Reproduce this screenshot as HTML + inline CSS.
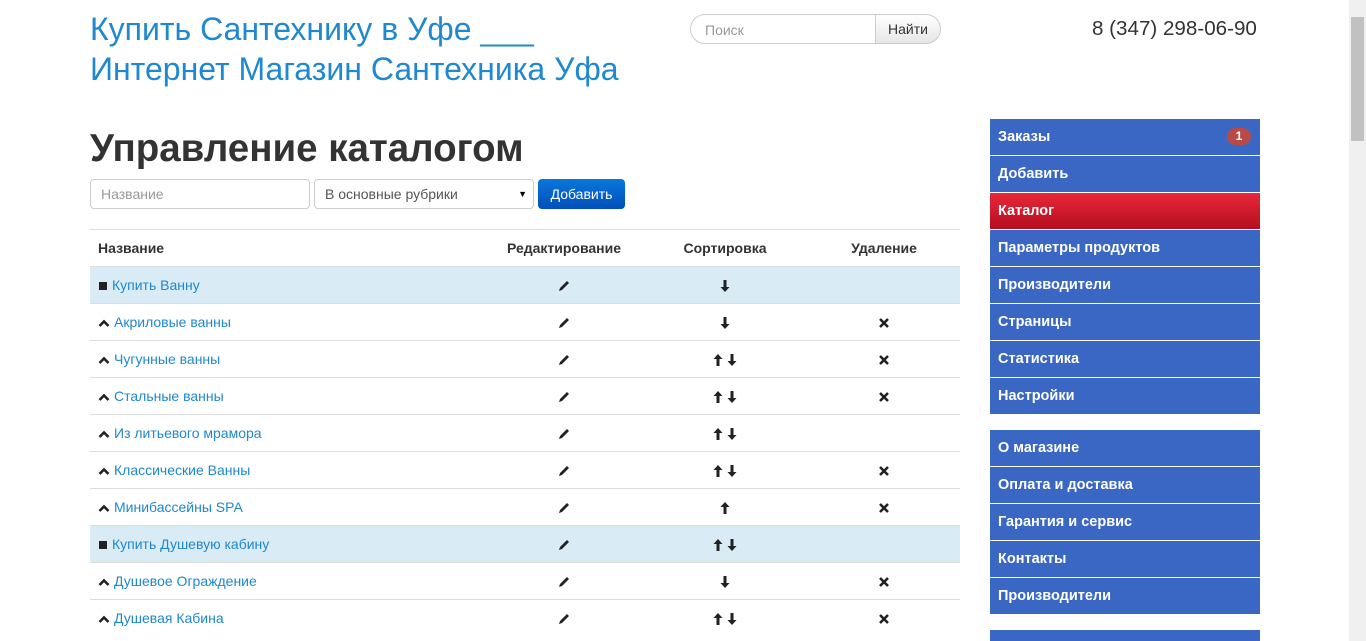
<!DOCTYPE html>
<html><head><meta charset="utf-8"><style>
html,body{margin:0;width:1366px;height:641px;overflow:hidden}
body{font-family:"Liberation Sans",Arial,sans-serif;background:#fff;position:relative;color:#333}
.a{position:absolute}
.title{left:90px;top:9px;font-size:32px;line-height:40px;color:#1e88d0}
.search{left:690px;top:14px;width:186px;height:30px;border:1px solid #ccc;border-radius:15px 0 0 15px;box-sizing:border-box;font-size:14px;color:#999;padding:7px 14px}
.sbtn{left:875px;top:14px;width:66px;height:30px;border:1px solid #ccc;border-radius:0 15px 15px 0;box-sizing:border-box;background:linear-gradient(#fff,#e6e6e6);font-size:14px;text-align:center;line-height:28px}
.phone{left:1092px;top:17px;font-size:20.6px;color:#333}
h1{position:absolute;left:90px;top:127px;margin:0;font-size:38.5px;font-weight:bold;color:#333}
.inp{top:179px;height:30px;border:1px solid #ccc;border-radius:4px;box-sizing:border-box;font-size:14px;padding:6px 10px}
.add{left:538px;top:179px;width:87px;height:30px;border-radius:4px;background:linear-gradient(#0a77db,#0050b8);color:#fff;font-size:14px;text-align:center;line-height:30px}
table{position:absolute;left:90px;top:229px;width:870px;border-collapse:collapse;font-size:14px}
td,th{height:36px;border-top:1px solid #ddd;padding:0 8px;text-align:center}
th{font-weight:bold;font-size:14px}
td:first-child,th:first-child{text-align:left}
tr.h td{background:#d9ecf5}
a{color:#1e88d0;text-decoration:none;margin-left:4px}
svg{vertical-align:middle}
.side{left:990px;width:270px}
.side div{height:36px;border-bottom:1px solid #fff;background:#3b67c4;color:#fff;font-size:14.5px;font-weight:bold;line-height:36px;padding-left:8px;position:relative}
.side div.r{background:linear-gradient(#e8283a,#b50e1e)}
.badge{position:absolute;right:9px;top:9px;background:#b94a48;border-radius:9px;width:24px;height:17px;font-size:12px;line-height:17px;text-align:center;font-weight:bold}
.sb{left:1349px;top:0;width:17px;height:641px;background:#f0f0f0}
.th{left:1351px;top:17px;width:13px;height:124px;background:#c1c1c1}
</style></head><body>
<svg width="0" height="0" style="position:absolute"><defs>
<symbol id="p" viewBox="0 0 14 14"><path d="M2 12 L3 9 L10 2 L12 4 L5 11 Z" fill="#222"/></symbol>
<symbol id="d" viewBox="0 0 10 14"><path d="M3.5 1h3v7h3L5 13 0.5 8h3z" fill="#222"/></symbol>
<symbol id="u" viewBox="0 0 10 14"><path d="M3.5 13h3V6h3L5 1 0.5 6h3z" fill="#222"/></symbol>
<symbol id="x" viewBox="0 0 12 12"><path d="M2 2L10 10M10 2L2 10" stroke="#222" stroke-width="2.6"/></symbol>
<symbol id="c" viewBox="0 0 12 10"><path d="M1.5 8L6 3.5 10.5 8" stroke="#222" stroke-width="2.6" fill="none"/></symbol>
<symbol id="s" viewBox="0 0 10 10"><rect x="1" y="1" width="8" height="8" fill="#222"/></symbol>
</defs></svg>
<div class="a title">Купить Сантехнику в Уфе ___<br>Интернет Магазин Сантехника Уфа</div>
<div class="a search">Поиск</div><div class="a sbtn">Найти</div>
<div class="a phone">8 (347) 298-06-90</div>
<h1>Управление каталогом</h1>
<div class="a inp" style="left:90px;width:220px;color:#999">Название</div>
<div class="a inp" style="left:314px;width:220px;color:#555">В основные рубрики<span style="position:absolute;right:6px;font-size:9px;color:#000;top:9px">▼</span></div>
<div class="a add">Добавить</div>
<table>
<tr><th style="width:380px">Название</th><th style="width:140px">Редактирование</th><th style="width:150px">Сортировка</th><th>Удаление</th></tr>
<tr class="h"><td><svg width="10" height="10"><use href="#s"/></svg><a>Купить Ванну</a></td><td><svg width="14" height="14"><use href="#p"/></svg></td><td><svg width="10" height="14"><use href="#d"/></svg></td><td></td></tr>
<tr><td><svg width="12" height="10"><use href="#c"/></svg><a>Акриловые ванны</a></td><td><svg width="14" height="14"><use href="#p"/></svg></td><td><svg width="10" height="14"><use href="#d"/></svg></td><td><svg width="12" height="12"><use href="#x"/></svg></td></tr>
<tr><td><svg width="12" height="10"><use href="#c"/></svg><a>Чугунные ванны</a></td><td><svg width="14" height="14"><use href="#p"/></svg></td><td><svg width="10" height="14"><use href="#u"/></svg> <svg width="10" height="14"><use href="#d"/></svg></td><td><svg width="12" height="12"><use href="#x"/></svg></td></tr>
<tr><td><svg width="12" height="10"><use href="#c"/></svg><a>Стальные ванны</a></td><td><svg width="14" height="14"><use href="#p"/></svg></td><td><svg width="10" height="14"><use href="#u"/></svg> <svg width="10" height="14"><use href="#d"/></svg></td><td><svg width="12" height="12"><use href="#x"/></svg></td></tr>
<tr><td><svg width="12" height="10"><use href="#c"/></svg><a>Из литьевого мрамора</a></td><td><svg width="14" height="14"><use href="#p"/></svg></td><td><svg width="10" height="14"><use href="#u"/></svg> <svg width="10" height="14"><use href="#d"/></svg></td><td></td></tr>
<tr><td><svg width="12" height="10"><use href="#c"/></svg><a>Классические Ванны</a></td><td><svg width="14" height="14"><use href="#p"/></svg></td><td><svg width="10" height="14"><use href="#u"/></svg> <svg width="10" height="14"><use href="#d"/></svg></td><td><svg width="12" height="12"><use href="#x"/></svg></td></tr>
<tr><td><svg width="12" height="10"><use href="#c"/></svg><a>Минибассейны SPA</a></td><td><svg width="14" height="14"><use href="#p"/></svg></td><td><svg width="10" height="14"><use href="#u"/></svg></td><td><svg width="12" height="12"><use href="#x"/></svg></td></tr>
<tr class="h"><td><svg width="10" height="10"><use href="#s"/></svg><a>Купить Душевую кабину</a></td><td><svg width="14" height="14"><use href="#p"/></svg></td><td><svg width="10" height="14"><use href="#u"/></svg> <svg width="10" height="14"><use href="#d"/></svg></td><td></td></tr>
<tr><td><svg width="12" height="10"><use href="#c"/></svg><a>Душевое Ограждение</a></td><td><svg width="14" height="14"><use href="#p"/></svg></td><td><svg width="10" height="14"><use href="#d"/></svg></td><td><svg width="12" height="12"><use href="#x"/></svg></td></tr>
<tr><td><svg width="12" height="10"><use href="#c"/></svg><a>Душевая Кабина</a></td><td><svg width="14" height="14"><use href="#p"/></svg></td><td><svg width="10" height="14"><use href="#u"/></svg> <svg width="10" height="14"><use href="#d"/></svg></td><td><svg width="12" height="12"><use href="#x"/></svg></td></tr>
</table>
<div class="a side" style="top:119px">
<div>Заказы<span class="badge">1</span></div><div>Добавить</div><div class="r">Каталог</div><div>Параметры продуктов</div><div>Производители</div><div>Страницы</div><div>Статистика</div><div>Настройки</div>
</div>
<div class="a side" style="top:430px">
<div>О магазине</div><div>Оплата и доставка</div><div>Гарантия и сервис</div><div>Контакты</div><div>Производители</div>
</div>
<div class="a side" style="top:630px;height:11px;overflow:hidden"><div></div></div>
<div class="a sb"></div><div class="a th"></div>
</body></html>
